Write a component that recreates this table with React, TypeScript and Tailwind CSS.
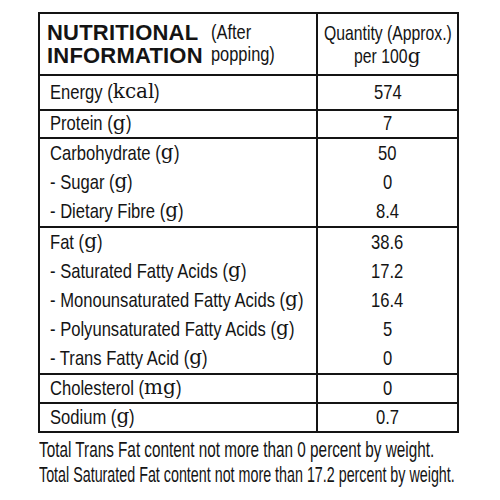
import { useLayoutEffect, useRef, useState } from "react";

const sans = "font-['Liberation_Sans',sans-serif]";
const serif = "font-['DejaVu_Serif','Liberation_Serif',serif]";

// condensed text: squeeze horizontally, then give back the space the transform leaves behind
const Cond = ({ children, s = 0.79 }: { children: React.ReactNode; s?: number }) => {
  const ref = useRef<HTMLSpanElement>(null);
  const [mr, setMr] = useState(0);
  useLayoutEffect(() => {
    if (ref.current) setMr(-ref.current.offsetWidth * (1 - s));
  }, [s]);
  return (
    <span
      ref={ref}
      className="inline-block whitespace-pre origin-left"
      style={{ transform: `scaleX(${s})`, marginRight: mr }}
    >
      {children}
    </span>
  );
};

// unit letters (g, kcal, mg) are set in a serif face on the pack
const U = ({ children }: { children: string }) => <span className={`${serif} text-[20px]`}>{children}</span>;

type Line = { text: string; unit: string; value: string };

const Section = ({ lines, h, last }: { lines: Line[]; h: string; last?: boolean }) => (
  <div className={last ? "" : "border-b-2 border-[#141414]"}>
    {lines.map((l, i) => (
      <div key={i} className={`grid grid-cols-[278px_1fr] ${h}`}>
        <div className="border-r-2 border-[#141414] pl-[10px] pb-[3px] flex items-center leading-none whitespace-nowrap">
          <Cond>{l.text + " ("}</Cond>
          <U>{l.unit}</U>
          <Cond>)</Cond>
        </div>
        <div className="flex items-center justify-center pb-[3px] leading-none">
          <Cond>{l.value}</Cond>
        </div>
      </div>
    ))}
  </div>
);

const App = () => {
  return (
    <div className={`w-[500px] h-[500px] bg-white text-[#141414] ${sans} text-[21px] overflow-hidden`}>
      <div className="ml-[38px] mt-[12px] w-[421px] border-2 border-[#141414]">
        {/* header */}
        <div className="grid grid-cols-[278px_1fr] h-[62px] border-b-2 border-[#141414]">
          <div className="border-r-2 border-[#141414] pl-[7px] flex items-center">
            <div className="font-bold text-[22px] leading-[23px] tracking-[0.2px]">
              NUTRITIONAL
              <br />
              INFORMATION
            </div>
            <div className="ml-2 text-[20px] leading-[22px] -mt-[3px]">
              <Cond s={0.82}>(After</Cond>
              <br />
              <Cond s={0.82}>popping)</Cond>
            </div>
          </div>
          <div className="flex items-center justify-center text-center leading-[23px]">
            <div className="flex flex-col items-center">
              <div>
                <Cond s={0.75}>Quantity (Approx.)</Cond>
              </div>
              <div>
                <Cond s={0.75}>{"per 100"}</Cond>
                <U>g</U>
              </div>
            </div>
          </div>
        </div>

        <Section h="h-[33px]" lines={[{ text: "Energy", unit: "kcal", value: "574" }]} />
        <Section h="h-[26px]" lines={[{ text: "Protein", unit: "g", value: "7" }]} />
        <Section
          h="h-[29px]"
          lines={[
            { text: "Carbohydrate", unit: "g", value: "50" },
            { text: "- Sugar", unit: "g", value: "0" },
            { text: "- Dietary Fibre", unit: "g", value: "8.4" },
          ]}
        />
        <Section
          h="h-[29px]"
          lines={[
            { text: "Fat", unit: "g", value: "38.6" },
            { text: "- Saturated Fatty Acids", unit: "g", value: "17.2" },
            { text: "- Monounsaturated Fatty Acids", unit: "g", value: "16.4" },
            { text: "- Polyunsaturated Fatty Acids", unit: "g", value: "5" },
            { text: "- Trans Fatty Acid", unit: "g", value: "0" },
          ]}
        />
        <Section h="h-[27px]" lines={[{ text: "Cholesterol", unit: "mg", value: "0" }]} />
        <Section h="h-[27px]" last lines={[{ text: "Sodium", unit: "g", value: "0.7" }]} />
      </div>

      <div className="ml-[39px] mt-[4px] text-[22px] leading-[25px] whitespace-nowrap">
        <div>
          <Cond s={0.695}>Total Trans Fat content not more than 0 percent by weight.</Cond>
        </div>
        <div>
          <Cond s={0.65}>Total Saturated Fat content not more than 17.2 percent by weight.</Cond>
        </div>
      </div>
    </div>
  );
};

export default App;
